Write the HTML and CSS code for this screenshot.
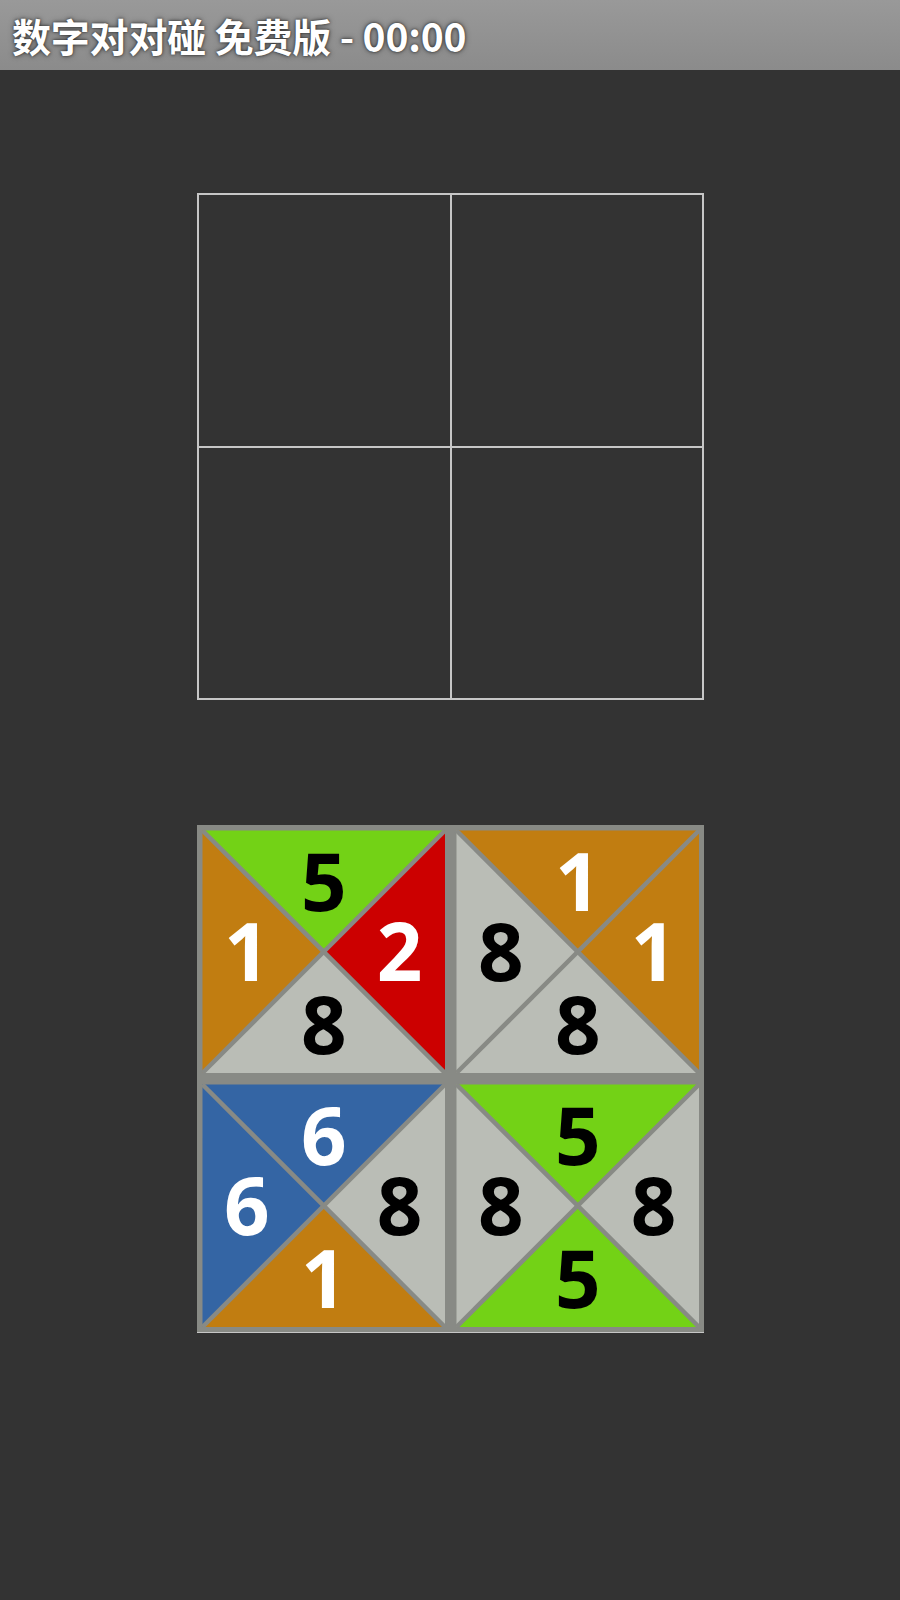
FILE: index.html
```html
<!DOCTYPE html>
<html lang="zh-CN">
<head>
<meta charset="utf-8">
<title>数字对对碰 免费版</title>
<link rel="stylesheet" href="styles.css">
</head>
<body>
<header class="titlebar">数字对对碰 免费版 - 00:00</header>
<main class="main">
  <div class="grid target">
    <div class="cell"></div><div class="cell"></div>
    <div class="cell"></div><div class="cell"></div>
  </div>
  <div class="grid board">
    <svg class="tile" viewBox="0 0 254 254">
      <rect class="frame" width="254" height="254"/>
      <polygon class="c-green" points="5.5,5.5 248.5,5.5 127,127"/>
      <polygon class="c-red" points="248.5,5.5 248.5,248.5 127,127"/>
      <polygon class="c-gray" points="5.5,248.5 248.5,248.5 127,127"/>
      <polygon class="c-orange" points="5.5,5.5 5.5,248.5 127,127"/>
      <line class="diag" x1="5.5" y1="5.5" x2="248.5" y2="248.5"/>
      <line class="diag" x1="248.5" y1="5.5" x2="5.5" y2="248.5"/>
      <text class="num dark" x="127" y="86">5</text>
      <text class="num light" x="203" y="156">2</text>
      <text class="num dark" x="127" y="229">8</text>
      <text class="num light" x="50" y="156">1</text>
    </svg>
    <svg class="tile" viewBox="0 0 254 254">
      <rect class="frame" width="254" height="254"/>
      <polygon class="c-orange" points="5.5,5.5 248.5,5.5 127,127"/>
      <polygon class="c-orange" points="248.5,5.5 248.5,248.5 127,127"/>
      <polygon class="c-gray" points="5.5,248.5 248.5,248.5 127,127"/>
      <polygon class="c-gray" points="5.5,5.5 5.5,248.5 127,127"/>
      <line class="diag" x1="5.5" y1="5.5" x2="248.5" y2="248.5"/>
      <line class="diag" x1="248.5" y1="5.5" x2="5.5" y2="248.5"/>
      <text class="num light" x="127" y="86">1</text>
      <text class="num light" x="203" y="156">1</text>
      <text class="num dark" x="127" y="229">8</text>
      <text class="num dark" x="50" y="156">8</text>
    </svg>
    <svg class="tile" viewBox="0 0 254 254">
      <rect class="frame" width="254" height="254"/>
      <polygon class="c-blue" points="5.5,5.5 248.5,5.5 127,127"/>
      <polygon class="c-gray" points="248.5,5.5 248.5,248.5 127,127"/>
      <polygon class="c-orange" points="5.5,248.5 248.5,248.5 127,127"/>
      <polygon class="c-blue" points="5.5,5.5 5.5,248.5 127,127"/>
      <line class="diag" x1="5.5" y1="5.5" x2="248.5" y2="248.5"/>
      <line class="diag" x1="248.5" y1="5.5" x2="5.5" y2="248.5"/>
      <text class="num light" x="127" y="86">6</text>
      <text class="num dark" x="203" y="156">8</text>
      <text class="num light" x="127" y="229">1</text>
      <text class="num light" x="50" y="156">6</text>
    </svg>
    <svg class="tile" viewBox="0 0 254 254">
      <rect class="frame" width="254" height="254"/>
      <polygon class="c-green" points="5.5,5.5 248.5,5.5 127,127"/>
      <polygon class="c-gray" points="248.5,5.5 248.5,248.5 127,127"/>
      <polygon class="c-green" points="5.5,248.5 248.5,248.5 127,127"/>
      <polygon class="c-gray" points="5.5,5.5 5.5,248.5 127,127"/>
      <line class="diag" x1="5.5" y1="5.5" x2="248.5" y2="248.5"/>
      <line class="diag" x1="248.5" y1="5.5" x2="5.5" y2="248.5"/>
      <text class="num dark" x="127" y="86">5</text>
      <text class="num dark" x="203" y="156">8</text>
      <text class="num dark" x="127" y="229">5</text>
      <text class="num dark" x="50" y="156">8</text>
    </svg>
  </div>
</main>
</body>
</html>
```
FILE: styles.css
```css
html, body {
  margin: 0;
  padding: 0;
}
body {
  background: #333333;
  width: 900px;
  min-height: 1600px;
  font-family: "Noto Sans CJK SC", "Noto Sans", sans-serif;
}
.titlebar {
  height: 70px;
  box-sizing: border-box;
  padding-left: 12px;
  display: flex;
  align-items: center;
  background: linear-gradient(#999999, #8b8b8b);
  color: #ffffff;
  font-size: 39px;
  font-weight: 700;
  letter-spacing: -0.2px;
  text-shadow: 0 0 3px rgba(0, 0, 0, 0.7), 0 0 6px rgba(0, 0, 0, 0.4);
  white-space: nowrap;
}
.main {
  display: flex;
  flex-direction: column;
  align-items: center;
  padding-top: 123px;
  gap: 125px;
}
.grid {
  display: grid;
  grid-template-columns: 253.5px 253.5px;
  grid-template-rows: 253.5px 253.5px;
  width: 507px;
  height: 507px;
  margin-left: 1px;
}
.target {
  box-sizing: border-box;
  border-top: 2px solid #c6c6c6;
  border-left: 2px solid #c6c6c6;
  grid-template-columns: 252.5px 252.5px;
  grid-template-rows: 252.5px 252.5px;
}
.target .cell {
  border-right: 2px solid #c6c6c6;
  border-bottom: 2px solid #c6c6c6;
}
.board {
  background: #888a85;
  border-bottom: 1px solid #c6c6c6;
}
.tile {
  display: block;
  width: 253.5px;
  height: 253.5px;
}
.frame { fill: #888a85; }
.c-green { fill: #73d216; }
.c-orange { fill: #c17d11; }
.c-red { fill: #cc0000; }
.c-gray { fill: #babdb6; }
.c-blue { fill: #3465a4; }
.diag {
  stroke: #888a85;
  stroke-width: 4.5;
}
.num {
  font-family: "Open Sans", Roboto, sans-serif;
  font-weight: 700;
  font-size: 80px;
  text-anchor: middle;
}
.dark { fill: #000000; }
.light { fill: #ffffff; }
```
